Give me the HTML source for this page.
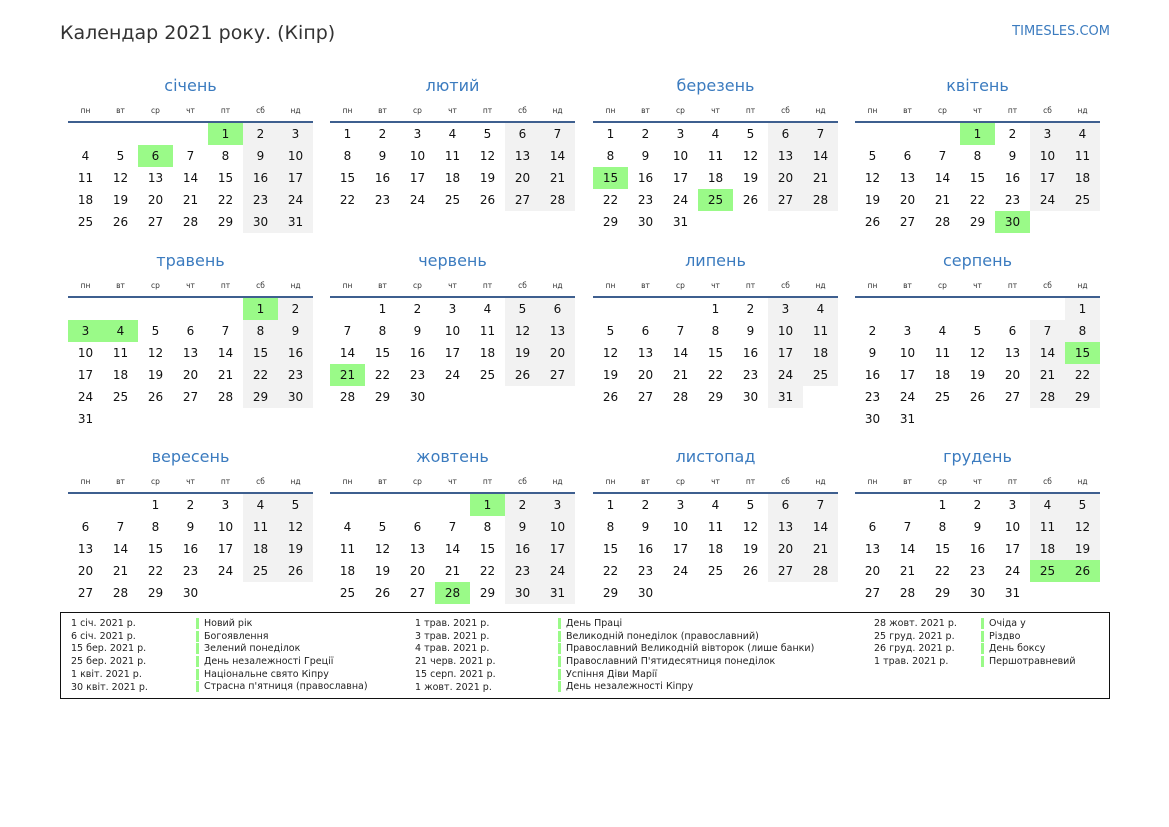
<!DOCTYPE html>
<html><head><meta charset="utf-8"><style>
body{margin:0;width:1169px;height:827px;background:#fff;font-family:"DejaVu Sans","Liberation Sans",sans-serif;position:relative;overflow:hidden;color:#111}
.t{position:absolute;left:60px;top:22px;font-size:19px;color:#333}
.s{position:absolute;right:59px;top:24px;font-size:13px;color:#3b7bbf}
.m{position:absolute;width:245px}
.m .n{height:26px;line-height:26px;text-align:center;font-size:16px;color:#3b7bbf}
table{border-collapse:collapse;table-layout:fixed;width:245px}
th{height:22px;font-size:7.5px;font-weight:normal;color:#333;border-bottom:2px solid #3e5f8f;padding:0}
td{width:35px;height:22px;padding:0;text-align:center;font-size:12px}
td:nth-child(n+6):not(:empty){background:#f2f2f2}
td.h{background:#9afa88 !important}
.lg{position:absolute;left:60px;top:612px;width:1048px;height:85px;border:1px solid #111}
.c{position:absolute;top:5px;font-size:9.5px;line-height:12.7px;color:#222;white-space:nowrap}
.b div{border-left:3px solid #9afa88;padding-left:5px;height:11px;line-height:11px;margin-bottom:1.7px}
</style></head><body>
<div class="t">Календар 2021 року. (Кіпр)</div>
<div class="s">TIMESLES.COM</div>

<div class="m" style="left:68px;top:73px"><div class="n">січень</div><table><tr><th>пн</th><th>вт</th><th>ср</th><th>чт</th><th>пт</th><th>сб</th><th>нд</th></tr>
<tr><td></td><td></td><td></td><td></td><td class="h">1</td><td>2</td><td>3</td></tr>
<tr><td>4</td><td>5</td><td class="h">6</td><td>7</td><td>8</td><td>9</td><td>10</td></tr>
<tr><td>11</td><td>12</td><td>13</td><td>14</td><td>15</td><td>16</td><td>17</td></tr>
<tr><td>18</td><td>19</td><td>20</td><td>21</td><td>22</td><td>23</td><td>24</td></tr>
<tr><td>25</td><td>26</td><td>27</td><td>28</td><td>29</td><td>30</td><td>31</td></tr></table></div>

<div class="m" style="left:330px;top:73px"><div class="n">лютий</div><table><tr><th>пн</th><th>вт</th><th>ср</th><th>чт</th><th>пт</th><th>сб</th><th>нд</th></tr>
<tr><td>1</td><td>2</td><td>3</td><td>4</td><td>5</td><td>6</td><td>7</td></tr>
<tr><td>8</td><td>9</td><td>10</td><td>11</td><td>12</td><td>13</td><td>14</td></tr>
<tr><td>15</td><td>16</td><td>17</td><td>18</td><td>19</td><td>20</td><td>21</td></tr>
<tr><td>22</td><td>23</td><td>24</td><td>25</td><td>26</td><td>27</td><td>28</td></tr></table></div>

<div class="m" style="left:593px;top:73px"><div class="n">березень</div><table><tr><th>пн</th><th>вт</th><th>ср</th><th>чт</th><th>пт</th><th>сб</th><th>нд</th></tr>
<tr><td>1</td><td>2</td><td>3</td><td>4</td><td>5</td><td>6</td><td>7</td></tr>
<tr><td>8</td><td>9</td><td>10</td><td>11</td><td>12</td><td>13</td><td>14</td></tr>
<tr><td class="h">15</td><td>16</td><td>17</td><td>18</td><td>19</td><td>20</td><td>21</td></tr>
<tr><td>22</td><td>23</td><td>24</td><td class="h">25</td><td>26</td><td>27</td><td>28</td></tr>
<tr><td>29</td><td>30</td><td>31</td><td></td><td></td><td></td><td></td></tr></table></div>

<div class="m" style="left:855px;top:73px"><div class="n">квітень</div><table><tr><th>пн</th><th>вт</th><th>ср</th><th>чт</th><th>пт</th><th>сб</th><th>нд</th></tr>
<tr><td></td><td></td><td></td><td class="h">1</td><td>2</td><td>3</td><td>4</td></tr>
<tr><td>5</td><td>6</td><td>7</td><td>8</td><td>9</td><td>10</td><td>11</td></tr>
<tr><td>12</td><td>13</td><td>14</td><td>15</td><td>16</td><td>17</td><td>18</td></tr>
<tr><td>19</td><td>20</td><td>21</td><td>22</td><td>23</td><td>24</td><td>25</td></tr>
<tr><td>26</td><td>27</td><td>28</td><td>29</td><td class="h">30</td><td></td><td></td></tr></table></div>

<div class="m" style="left:68px;top:248px"><div class="n">травень</div><table><tr><th>пн</th><th>вт</th><th>ср</th><th>чт</th><th>пт</th><th>сб</th><th>нд</th></tr>
<tr><td></td><td></td><td></td><td></td><td></td><td class="h">1</td><td>2</td></tr>
<tr><td class="h">3</td><td class="h">4</td><td>5</td><td>6</td><td>7</td><td>8</td><td>9</td></tr>
<tr><td>10</td><td>11</td><td>12</td><td>13</td><td>14</td><td>15</td><td>16</td></tr>
<tr><td>17</td><td>18</td><td>19</td><td>20</td><td>21</td><td>22</td><td>23</td></tr>
<tr><td>24</td><td>25</td><td>26</td><td>27</td><td>28</td><td>29</td><td>30</td></tr>
<tr><td>31</td><td></td><td></td><td></td><td></td><td></td><td></td></tr></table></div>

<div class="m" style="left:330px;top:248px"><div class="n">червень</div><table><tr><th>пн</th><th>вт</th><th>ср</th><th>чт</th><th>пт</th><th>сб</th><th>нд</th></tr>
<tr><td></td><td>1</td><td>2</td><td>3</td><td>4</td><td>5</td><td>6</td></tr>
<tr><td>7</td><td>8</td><td>9</td><td>10</td><td>11</td><td>12</td><td>13</td></tr>
<tr><td>14</td><td>15</td><td>16</td><td>17</td><td>18</td><td>19</td><td>20</td></tr>
<tr><td class="h">21</td><td>22</td><td>23</td><td>24</td><td>25</td><td>26</td><td>27</td></tr>
<tr><td>28</td><td>29</td><td>30</td><td></td><td></td><td></td><td></td></tr></table></div>

<div class="m" style="left:593px;top:248px"><div class="n">липень</div><table><tr><th>пн</th><th>вт</th><th>ср</th><th>чт</th><th>пт</th><th>сб</th><th>нд</th></tr>
<tr><td></td><td></td><td></td><td>1</td><td>2</td><td>3</td><td>4</td></tr>
<tr><td>5</td><td>6</td><td>7</td><td>8</td><td>9</td><td>10</td><td>11</td></tr>
<tr><td>12</td><td>13</td><td>14</td><td>15</td><td>16</td><td>17</td><td>18</td></tr>
<tr><td>19</td><td>20</td><td>21</td><td>22</td><td>23</td><td>24</td><td>25</td></tr>
<tr><td>26</td><td>27</td><td>28</td><td>29</td><td>30</td><td>31</td><td></td></tr></table></div>

<div class="m" style="left:855px;top:248px"><div class="n">серпень</div><table><tr><th>пн</th><th>вт</th><th>ср</th><th>чт</th><th>пт</th><th>сб</th><th>нд</th></tr>
<tr><td></td><td></td><td></td><td></td><td></td><td></td><td>1</td></tr>
<tr><td>2</td><td>3</td><td>4</td><td>5</td><td>6</td><td>7</td><td>8</td></tr>
<tr><td>9</td><td>10</td><td>11</td><td>12</td><td>13</td><td>14</td><td class="h">15</td></tr>
<tr><td>16</td><td>17</td><td>18</td><td>19</td><td>20</td><td>21</td><td>22</td></tr>
<tr><td>23</td><td>24</td><td>25</td><td>26</td><td>27</td><td>28</td><td>29</td></tr>
<tr><td>30</td><td>31</td><td></td><td></td><td></td><td></td><td></td></tr></table></div>

<div class="m" style="left:68px;top:444px"><div class="n">вересень</div><table><tr><th>пн</th><th>вт</th><th>ср</th><th>чт</th><th>пт</th><th>сб</th><th>нд</th></tr>
<tr><td></td><td></td><td>1</td><td>2</td><td>3</td><td>4</td><td>5</td></tr>
<tr><td>6</td><td>7</td><td>8</td><td>9</td><td>10</td><td>11</td><td>12</td></tr>
<tr><td>13</td><td>14</td><td>15</td><td>16</td><td>17</td><td>18</td><td>19</td></tr>
<tr><td>20</td><td>21</td><td>22</td><td>23</td><td>24</td><td>25</td><td>26</td></tr>
<tr><td>27</td><td>28</td><td>29</td><td>30</td><td></td><td></td><td></td></tr></table></div>

<div class="m" style="left:330px;top:444px"><div class="n">жовтень</div><table><tr><th>пн</th><th>вт</th><th>ср</th><th>чт</th><th>пт</th><th>сб</th><th>нд</th></tr>
<tr><td></td><td></td><td></td><td></td><td class="h">1</td><td>2</td><td>3</td></tr>
<tr><td>4</td><td>5</td><td>6</td><td>7</td><td>8</td><td>9</td><td>10</td></tr>
<tr><td>11</td><td>12</td><td>13</td><td>14</td><td>15</td><td>16</td><td>17</td></tr>
<tr><td>18</td><td>19</td><td>20</td><td>21</td><td>22</td><td>23</td><td>24</td></tr>
<tr><td>25</td><td>26</td><td>27</td><td class="h">28</td><td>29</td><td>30</td><td>31</td></tr></table></div>

<div class="m" style="left:593px;top:444px"><div class="n">листопад</div><table><tr><th>пн</th><th>вт</th><th>ср</th><th>чт</th><th>пт</th><th>сб</th><th>нд</th></tr>
<tr><td>1</td><td>2</td><td>3</td><td>4</td><td>5</td><td>6</td><td>7</td></tr>
<tr><td>8</td><td>9</td><td>10</td><td>11</td><td>12</td><td>13</td><td>14</td></tr>
<tr><td>15</td><td>16</td><td>17</td><td>18</td><td>19</td><td>20</td><td>21</td></tr>
<tr><td>22</td><td>23</td><td>24</td><td>25</td><td>26</td><td>27</td><td>28</td></tr>
<tr><td>29</td><td>30</td><td></td><td></td><td></td><td></td><td></td></tr></table></div>

<div class="m" style="left:855px;top:444px"><div class="n">грудень</div><table><tr><th>пн</th><th>вт</th><th>ср</th><th>чт</th><th>пт</th><th>сб</th><th>нд</th></tr>
<tr><td></td><td></td><td>1</td><td>2</td><td>3</td><td>4</td><td>5</td></tr>
<tr><td>6</td><td>7</td><td>8</td><td>9</td><td>10</td><td>11</td><td>12</td></tr>
<tr><td>13</td><td>14</td><td>15</td><td>16</td><td>17</td><td>18</td><td>19</td></tr>
<tr><td>20</td><td>21</td><td>22</td><td>23</td><td>24</td><td class="h">25</td><td class="h">26</td></tr>
<tr><td>27</td><td>28</td><td>29</td><td>30</td><td>31</td><td></td><td></td></tr></table></div>

<div class="lg">
<div class="c" style="left:10px">1 січ. 2021 р.<br>6 січ. 2021 р.<br>15 бер. 2021 р.<br>25 бер. 2021 р.<br>1 квіт. 2021 р.<br>30 квіт. 2021 р.</div>
<div class="c b" style="left:135px"><div>Новий рік</div><div>Богоявлення</div><div>Зелений понеділок</div><div>День незалежності Греції</div><div>Національне свято Кіпру</div><div>Страсна п'ятниця (православна)</div></div>
<div class="c" style="left:354px">1 трав. 2021 р.<br>3 трав. 2021 р.<br>4 трав. 2021 р.<br>21 черв. 2021 р.<br>15 серп. 2021 р.<br>1 жовт. 2021 р.</div>
<div class="c b" style="left:497px"><div>День Праці</div><div>Великодній понеділок (православний)</div><div>Православний Великодній вівторок (лише банки)</div><div>Православний П'ятидесятниця понеділок</div><div>Успіння Діви Марії</div><div>День незалежності Кіпру</div></div>
<div class="c" style="left:813px">28 жовт. 2021 р.<br>25 груд. 2021 р.<br>26 груд. 2021 р.<br>1 трав. 2021 р.</div>
<div class="c b" style="left:920px"><div>Очіда у</div><div>Різдво</div><div>День боксу</div><div>Першотравневий</div></div>
</div>
</body></html>
